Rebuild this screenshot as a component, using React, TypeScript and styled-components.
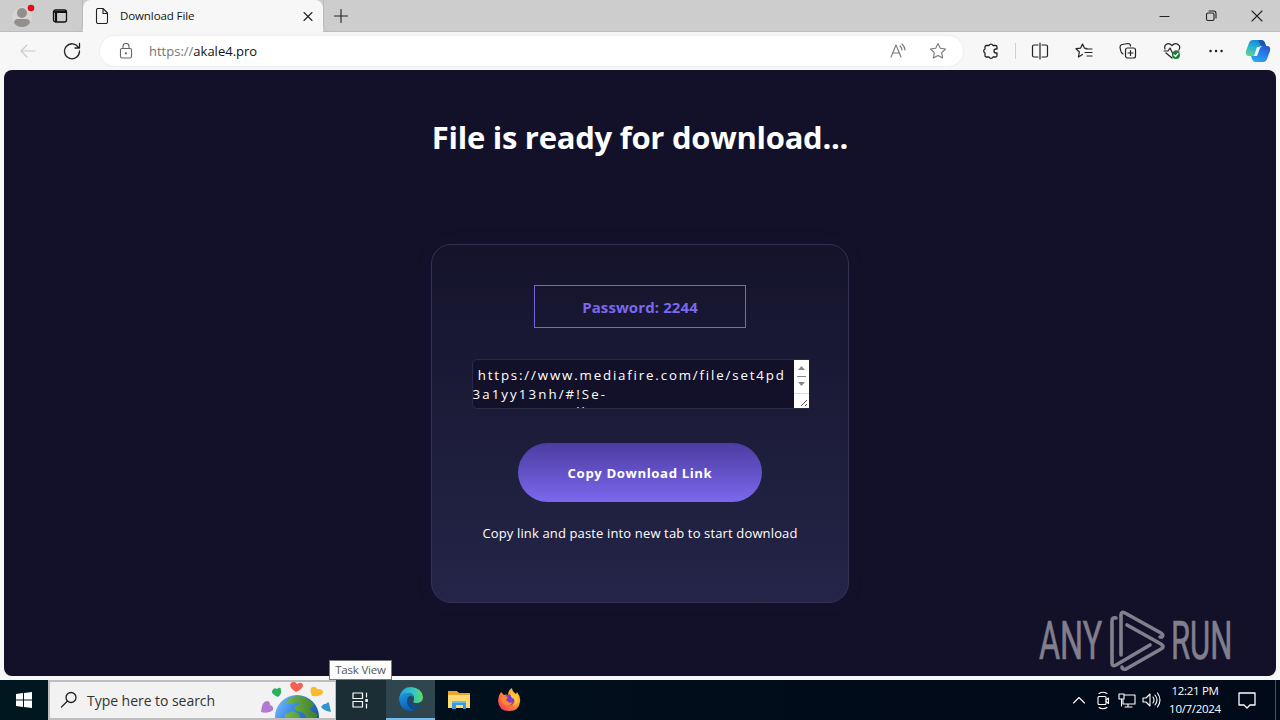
import React from 'react'
import styled, { createGlobalStyle } from 'styled-components'

const GlobalStyle = createGlobalStyle`
    * {
        box-sizing: border-box;
    }

    body {
        margin: 0;
        overflow: hidden;
        font-family: 'Open Sans', 'Noto Sans', sans-serif;
    }

    svg {
        display: block;
        flex-shrink: 0;
    }
`

const Desktop = styled.div`
    display: flex;
    flex-direction: column;
    width: 1280px;
    height: 720px;
    background: #f7f7f7;
`

const TabStrip = styled.div`
    display: flex;
    height: 32px;
    background: #cdcdcd;
    border-bottom: 1px solid #bdbdbd;
`

const ProfileArea = styled.div`
    display: flex;
    align-items: center;
    gap: 17px;
    width: 83px;
    padding-left: 11px;
    border-right: 1px solid #b9b9b9;
    border-radius: 0 0 6px 0;
`

const Tab = styled.div`
    display: flex;
    align-items: center;
    width: 240px;
    height: 32px;
    padding: 0 8px 0 11px;
    border-radius: 8px 8px 0 0;
    background: #f7f7f7;
`

const TabTitle = styled.span`
    flex: 1;
    margin-left: 10px;
    padding-bottom: 1px;
    font-size: 11.5px;
    letter-spacing: -0.1px;
    color: #111;
`

const NewTab = styled.div`
    display: flex;
    align-items: center;
    flex: 1;
    padding-left: 10px;
    border-left: 1px solid #b9b9b9;
    border-radius: 0 0 0 6px;
`

const WindowButtons = styled.div`
    display: flex;
    align-items: center;
    gap: 34px;
    padding-right: 17px;
`

const Toolbar = styled.div`
    display: flex;
    align-items: center;
    height: 38px;
    padding-left: 19px;
`

const ReloadButton = styled.div`
    margin-left: 26px;
`

const AddressBar = styled.div`
    display: flex;
    align-items: center;
    width: 863px;
    height: 30px;
    margin-left: 19px;
    padding: 0 16px 0 18px;
    border-radius: 15px;
    background: #fff;
    box-shadow: 0 0 3px #e4e4e4;
`

const Address = styled.span`
    flex: 1;
    margin-left: 15px;
    font-size: 13px;
    color: #111;

    span {
        color: #747474;
    }
`

const AddressActions = styled.div`
    display: flex;
    gap: 22px;
`

const ToolbarIcons = styled.div`
    display: flex;
    align-items: center;
    flex: 1;
    gap: 26px;
    padding-left: 19px;
`

const Divider = styled.div`
    width: 1px;
    height: 16px;
    margin: 0 -11px;
    background: #cfcfcf;
`

const CopilotButton = styled.div`
    margin-left: -6px;
`

const Page = styled.main`
    display: flex;
    flex-direction: column;
    align-items: center;
    position: relative;
    height: 606px;
    margin: 0 4px 4px;
    padding-top: 43px;
    border-radius: 8px;
    background: #13112a;
`

const Title = styled.h1`
    margin: 0;
    font-size: 31px;
    line-height: 48px;
    font-weight: 700;
    letter-spacing: -0.27px;
    white-space: nowrap;
    color: #fff;
`

const Card = styled.section`
    display: flex;
    flex-direction: column;
    align-items: center;
    width: 418px;
    height: 359px;
    margin-top: 83px;
    padding-top: 40px;
    border: 1px solid #34314c;
    border-radius: 20px;
    background: linear-gradient(#15132b, #242548);
    box-shadow: 0 0 12px rgba(20, 18, 55, 0.6);
`

const Password = styled.div`
    width: 212px;
    height: 43px;
    border: 1px solid #7764dc;
    font-size: 15px;
    font-weight: 700;
    line-height: 43px;
    letter-spacing: 0.1px;
    text-align: center;
    color: #7b68ee;
`

const LinkBox = styled.div`
    display: flex;
    width: 337px;
    height: 50px;
    margin-top: 31px;
    border: 1px solid #2b2945;
    border-right: none;
    border-radius: 5px 0 0 5px;
    background: #13112a;
    overflow: hidden;
`

const LinkText = styled.div`
    flex: 1;
    padding-top: 6px;
    overflow: hidden;
`

const LinkLine = styled.div<{ $spacing: number }>`
    font-size: 13.3px;
    line-height: 19px;
    letter-spacing: ${({ $spacing }) => $spacing}px;
    white-space: pre;
    color: #fff;

    &:last-child {
        margin-top: -1px;
    }
`

const ScrollBar = styled.div`
    width: 15px;
    height: 48px;
    background: #fff;
`

const CopyButton = styled.button`
    width: 244px;
    height: 59px;
    margin-top: 34px;
    padding: 0;
    border: none;
    border-radius: 30px;
    background: linear-gradient(#4c3ca0, #7b68ee);
    font-family: inherit;
    font-size: 13.2px;
    font-weight: 700;
    letter-spacing: 0.6px;
    color: #fff;
`

const Hint = styled.p`
    margin: 21px 0 0;
    font-size: 13px;
    line-height: 20px;
    letter-spacing: 0.14px;
    white-space: nowrap;
    color: #fff;
`

const Watermark = styled.div`
    position: absolute;
    right: 45px;
    bottom: 3px;
    display: flex;
    align-items: center;
    height: 64px;
    color: #827f8d;
`

const WatermarkWord = styled.span<{ $width: number; $scale: number }>`
    width: ${({ $width }) => $width}px;
    font-family: Roboto, sans-serif;
    font-size: 53px;
    line-height: 64px;
    white-space: nowrap;
    transform: scaleX(${({ $scale }) => $scale});
    transform-origin: left center;
    -webkit-text-stroke: 0.7px #827f8d;
`

const Taskbar = styled.footer`
    display: flex;
    position: relative;
    height: 40px;
    background: linear-gradient(90deg, #001720, #010d1b 50%, #010a18);
`

const TaskButton = styled.div<{ $width?: number; $bg?: string; $active?: boolean }>`
    display: flex;
    align-items: center;
    justify-content: center;
    width: ${({ $width }) => $width || 49}px;
    background: ${({ $bg }) => $bg || 'transparent'};
    border-bottom: ${({ $active }) => ($active ? '2px solid #76b9ed' : 'none')};
`

const SearchBox = styled.div`
    display: flex;
    align-items: center;
    width: 288px;
    padding-left: 10px;
    border: 1px solid #bdbdbd;
    border-width: 2px 1px 2px 2px;
    background: #f2f2f2;
`

const SearchText = styled.span`
    flex: 1;
    margin-left: 9px;
    font-size: 14px;
    letter-spacing: -0.04px;
    white-space: nowrap;
    color: #333;
`

const Tooltip = styled.div`
    position: absolute;
    left: 329px;
    top: -20px;
    width: 63px;
    height: 20px;
    border: 1px solid #777;
    background: #fff;
    font-size: 11.5px;
    line-height: 18px;
    letter-spacing: -0.2px;
    text-align: center;
    color: #555;
`

const Tray = styled.div`
    display: flex;
    align-items: center;
    flex: 1;
    justify-content: flex-end;
`

const Clock = styled.div`
    width: 64px;
    margin-right: 8px;
    font-size: 11.5px;
    line-height: 18px;
    letter-spacing: -0.3px;
    text-align: center;
    color: #fff;
`

const ShowDesktop = styled.div`
    width: 5px;
    height: 40px;
    margin-left: 16px;
    border-left: 1px solid #4a515c;
`

type IconProps = {
    size?: number
    color?: string
    width?: number
    children: React.ReactNode
}

function Icon({ size = 18, color = '#222', width = 1.1, children }: IconProps) {
    return (
        <svg
            width={size}
            height={size}
            viewBox={`0 0 ${size} ${size}`}
            fill='none'
            stroke={color}
            strokeWidth={width}
            strokeLinecap='round'
            strokeLinejoin='round'>
            {children}
        </svg>
    )
}

const Avatar = () => (
    <svg width='24' height='28' viewBox='0 0 24 28'>
        <circle cx='11' cy='15' r='10' fill='#d8d5d1' />
        <circle cx='11' cy='11' r='5' fill='#91908e' />
        <path d='M3 21q0-4 4-4h8q4 0 4 4-3 4-8 4t-8-4z' fill='#91908e' />
        <circle cx='20' cy='6' r='3.3' fill='#e00b1c' />
    </svg>
)

const Copilot = () => (
    <svg width='26' height='24' viewBox='0 0 26 24'>
        <defs>
            <linearGradient id='cpLeft' x1='0.6' y1='0' x2='0.2' y2='1'>
                <stop offset='0' stopColor='#1780d8' />
                <stop offset='0.5' stopColor='#27b4d5' />
                <stop offset='1' stopColor='#62d28c' />
            </linearGradient>
            <linearGradient id='cpRight' x1='0.8' y1='0' x2='0.3' y2='1'>
                <stop offset='0' stopColor='#2458cf' />
                <stop offset='0.6' stopColor='#2b86ee' />
                <stop offset='1' stopColor='#28a9ee' />
            </linearGradient>
        </defs>
        <path d='M8 1h8q3 0 4 3l1 3h-4q-3 0-4 3l-2 5q-1 2-3 2H4q-4 0-3-5l3-8q1-3 4-3z' fill='url(#cpLeft)' />
        <path d='M18 23h-8q-2 0-3-3l-1-3h3q3 0 4-3l2-5q1-2 3-2h4q4 0 3 5l-3 8q-1 3-4 3z' fill='url(#cpRight)' />
        <path d='M13 1h3q3 0 4 3l1 3h-5z' fill='#1858ae' />
        <path d='M12 8h3l-3 9H9z' fill='#eef8fc' />
    </svg>
)

const RunLogo = () => (
    <svg
        width='62'
        height='64'
        viewBox='0 0 62 64'
        fill='none'
        stroke='#827f8d'
        strokeWidth='3.6'
        strokeLinecap='round'
        strokeLinejoin='round'>
        <path d='M7 9Q3 8 3 12v42q0 4 4 2l34-20' />
        <path d='M12 46V6q0-4 4-2l36 20q3 2 1 4l-2 0' />
        <path d='M18 16l34 19q4 3 0 5L17 60q-4 1-4-2' />
    </svg>
)

const EarthArt = () => (
    <svg width='74' height='36' viewBox='0 0 74 36'>
        <defs>
            <linearGradient id='sea' x1='0' y1='0' x2='1' y2='0.6'>
                <stop offset='0' stopColor='#7cc4ff' />
                <stop offset='0.5' stopColor='#3682e0' />
                <stop offset='1' stopColor='#1450a0' />
            </linearGradient>
            <linearGradient id='land' x1='0' x2='1'>
                <stop offset='0' stopColor='#74b84a' />
                <stop offset='1' stopColor='#3f7f2b' />
            </linearGradient>
        </defs>
        <circle cx='36' cy='35' r='22' fill='url(#sea)' />
        <path d='M25 20q3-5 11-6 8 0 14 5l3 4-4 3 1 3 6 3v4H45q-1-5-5-6l-5-1-2-4 5-2-1-3-6 2-5 0zM24 32l8-3 6 3 1 4H24z' fill='url(#land)' />
        <path d='M35 10q-8-5-5-9 3-3 6 1 5-3 6 1 0 4-7 7z' fill='#f26053' />
        <path d='M17 15q-7-3-6-6 2-4 5-2 4-3 4 1 1 4-3 7z' fill='#2daf60' />
        <path d='M51 14q-3-7 0-9 4-1 5 2 6 0 6 3-1 5-11 4z' fill='#fab92f' />
        <path d='M0 30q1-11 6-11 3 0 3 4 4 1 3 5-4 4-12 2z' fill='#b27ad3' />
        <path d='M60 25q3-4 5-3 2-3 3-1l2 9q-7-1-10-5z' fill='#3194d2' />
    </svg>
)

const EdgeLogo = () => (
    <svg width='24' height='24' viewBox='0 0 24 24'>
        <defs>
            <linearGradient id='edgeTop' x1='0' x2='1'>
                <stop offset='0' stopColor='#239ee2' />
                <stop offset='0.6' stopColor='#33c6c4' />
                <stop offset='1' stopColor='#62dc60' />
            </linearGradient>
            <linearGradient id='edgeSide' x1='0' y1='0' x2='0.4' y2='1'>
                <stop offset='0' stopColor='#1d9be6' />
                <stop offset='1' stopColor='#0d5fb4' />
            </linearGradient>
        </defs>
        <path d='M0 12Q2 0 12 0q11 1 12 10 0 6-7 6-4 0-2-3 1-6-5-7-7 0-10 6z' fill='url(#edgeTop)' />
        <path d='M0 12Q3 5 9 6q5 0 6 5-1-2-3-2-4 0-4 5 0 6 7 9-2 1-4 1Q1 23 0 12z' fill='url(#edgeSide)' />
        <path d='M10 10q-3 3-1 8 3 6 8 4 4-2 5-5-5 2-9 0-4-3-3-7z' fill='#0e4b8c' />
    </svg>
)

const Folder = () => (
    <svg width='23' height='20' viewBox='0 0 23 20'>
        <path d='M0 1h9l2 2h11v15H0z' fill='#e9a62c' />
        <path d='M0 5h22v13H0z' fill='#ffda72' />
        <path d='M4 19v-8h14v8h-3v-4H8v4z' fill='#359bdd' />
        <path d='M4 11h14v2H4z' fill='#66bceb' />
    </svg>
)

const Firefox = () => (
    <svg width='24' height='24' viewBox='0 0 24 24'>
        <defs>
            <linearGradient id='fox' x1='1' y1='0' x2='0' y2='1'>
                <stop offset='0' stopColor='#ffde35' />
                <stop offset='0.45' stopColor='#ff922d' />
                <stop offset='1' stopColor='#f52c67' />
            </linearGradient>
        </defs>
        <path d='M4 4l3 3q2-1 4 0 0-5 4-7 0 3 4 6l1-2q4 5 3 10-1 9-11 9T1 13q0-5 3-9z' fill='url(#fox)' />
        <circle cx='12' cy='12' r='5.5' fill='#783bd3' />
        <path d='M4 10q4-3 7-1l-2 3q3 4 7 2-3 5-8 3-4-2-4-7z' fill='#ff852e' />
        <path d='M14 3q-2 6 3 8 2 4-1 7 7-3 5-10-5-1-7-5z' fill='#ffc832' />
    </svg>
)

export default function App() {
    return (
        <Desktop>
            <GlobalStyle />
            <TabStrip>
                <ProfileArea>
                    <Avatar />
                    <Icon size={16} color='#111' width={1.3}>
                        <rect x='1.5' y='2' width='13' height='12' rx='2' />
                        <path d='M3 4h10.500M4 5v8' strokeWidth='2.200' />
                    </Icon>
                </ProfileArea>
                <Tab>
                    <Icon size={16}>
                        <path d='M2.5 2q0-1.5 1.5-1.5h5l4.5 4.5v9q0 1.5-1.5 1.5H4q-1.5 0-1.5-1.5zM9 1v4.5h4.5' />
                    </Icon>
                    <TabTitle>Download File</TabTitle>
                    <Icon size={14}><path d='M3 3.500l8 8M11 3.500l-8 8' /></Icon>
                </Tab>
                <NewTab>
                    <Icon size={14}><path d='M7 .5v13M.5 7h13' /></Icon>
                </NewTab>
                <WindowButtons>
                    <Icon size={12}><path d='M1 6.5h9' /></Icon>
                    <Icon size={12}>
                        <rect x='1.5' y='3' width='7.5' height='7.5' rx='1.5' />
                        <path d='M4 1h4.5q2.500 0 2.500 2.500V8' />
                    </Icon>
                    <Icon size={12}><path d='M1 1l10 10M11 1L1 11' /></Icon>
                </WindowButtons>
            </TabStrip>

            <Toolbar>
                <Icon color='#c9c9c9'><path d='M16 9H2M8 3L2 9l6 6' /></Icon>
                <ReloadButton>
                    <Icon width={1.3}><path d='M15.5 5.5A7.5 7.5 0 1 0 16.5 9M16.5 1.5v4.5H12' /></Icon>
                </ReloadButton>
                <AddressBar>
                    <Icon size={16} color='#666'>
                        <rect x='2.5' y='5.5' width='11' height='9.5' rx='1.5' />
                        <path d='M5 5.5V3.5q0-3 3-3t3 3v2' />
                        <circle cx='8' cy='10.3' r='0.6' fill='#666' />
                    </Icon>
                    <Address><span>https://</span>akale4.pro</Address>
                    <AddressActions>
                        <Icon color='#777'>
                            <path d='M2 15L7 3l5 12M4 11h6M11 4q2 2 2 4M13 2q3 3 3 6' />
                        </Icon>
                        <Icon color='#777'>
                            <path d='M9 1.5l2.3 4.7 5.2.8-3.8 3.7.9 5.2L9 13.500l-4.600 2.400.9-5.200L1.500 7l5.200-.8z' />
                        </Icon>
                    </AddressActions>
                </AddressBar>
                <ToolbarIcons>
                    <Icon width={1.3}>
                        <path d='M4.500 3.500h2.500a2.200 2.200 0 0 1 4 0h2.500q1.500 0 1.500 1.500v2h-1a2 2 0 0 0 0 4h1v2.500q0 1.500-1.500 1.500H11a2.200 2.200 0 0 1-4 0H4.500q-1.500 0-1.500-1.500V11a2.200 2.200 0 0 1 0-4V5q0-1.500 1.500-1.500z' />
                    </Icon>
                    <Divider />
                    <Icon width={1.2}><path d='M7 3H3Q1.5 3 1.5 4.5v9Q1.5 15 3 15h4M11 3h4q1.5 0 1.5 1.5v9q0 1.5-1.5 1.5h-4M9 1v16' /></Icon>
                    <Icon width={1.2}><path d='M12 6.500l-2.500-.3L7.500 2 5.500 6.200l-4.500.5L4.400 10l-1 5L7.500 12.500M11 7h6M10 10.500h7M12 14h5' /></Icon>
                    <Icon width={1.2}>
                        <rect x='6.5' y='6' width='10' height='10' rx='2' />
                        <path d='M11.500 8.500v5M9 11h5M4 12Q2 11 1.500 8L1 5q0-2 2-2.500l6-1q2 0 2.500 2V4' />
                    </Icon>
                    <Icon width={1.2}>
                        <path d='M2 7q-1-3 1-4.500 3-2 6 1 3-3 6-1 3 2 1 5M1 9h4l2-3 3 6 2-3h4M3 11l6 5' />
                        <circle cx='13' cy='13' r='4' fill='#168038' stroke='none' />
                        <path d='M11 13l1.5 1.5L15 11.5' stroke='#fff' />
                    </Icon>
                    <Icon><path d='M3.500 9h.1M9 9h.1M14.500 9h.1' strokeWidth='2.4' /></Icon>
                    <CopilotButton><Copilot /></CopilotButton>
                </ToolbarIcons>
            </Toolbar>

            <Page>
                <Title>File is ready for download...</Title>
                <Card>
                    <Password>Password: 2244</Password>
                    <LinkBox>
                        <LinkText>
                            <LinkLine $spacing={1.83}>{' https://www.mediafire.com/file/set4pd'}</LinkLine>
                            <LinkLine $spacing={2.08}>3a1yy13nh/#!Se-</LinkLine>
                            <LinkLine $spacing={2}>{'                   ll'}</LinkLine>
                        </LinkText>
                        <ScrollBar>
                            <svg width='15' height='48' viewBox='0 0 15 48'>
                                <path d='M4 10l3.5-4 3.5 4zM4 22l3.5 4 3.5-4z' fill='#858585' />
                                <path d='M3 16.5h9' stroke='#858585' />
                                <path d='M0 33.5h15' stroke='#ddd' />
                                <path d='M7 46l6-6M11 46l2-2' stroke='#555' />
                            </svg>
                        </ScrollBar>
                    </LinkBox>
                    <CopyButton>Copy Download Link</CopyButton>
                    <Hint>Copy link and paste into new tab to start download</Hint>
                </Card>
                <Watermark>
                    <WatermarkWord $width={70} $scale={0.61}>ANY</WatermarkWord>
                    <RunLogo />
                    <WatermarkWord $width={60} $scale={0.585}>RUN</WatermarkWord>
                </Watermark>
            </Page>

            <Taskbar>
                <TaskButton $width={48}>
                    <svg width='16' height='16' viewBox='0 0 16 16' fill='#fff'>
                        <path d='M0 2l7-1v6.5H0zM8 .9L16 0v7.5H8zM0 8.5h7V15l-7-1zM8 8.5h8V16l-8-.9z' />
                    </svg>
                </TaskButton>
                <SearchBox>
                    <Icon width={1.3}><circle cx='11' cy='6.5' r='5' /><path d='M7.5 10L1.5 16' /></Icon>
                    <SearchText>Type here to search</SearchText>
                    <EarthArt />
                </SearchBox>
                <TaskButton $width={50} $bg='#1b2e36'>
                    <Icon color='#fff' width={1.2}>
                        <path d='M1 2h9.500v5.500H1zM1 10.500h9.500V16H1zM14.500 2v4M14.500 13v4' />
                        <rect x='13.3' y='8' width='2.5' height='3' fill='#fff' stroke='none' />
                    </Icon>
                </TaskButton>
                <TaskButton $bg='#30464e' $active><EdgeLogo /></TaskButton>
                <TaskButton><Folder /></TaskButton>
                <TaskButton><Firefox /></TaskButton>
                <Tooltip>Task View</Tooltip>
                <Tray>
                    <Icon size={24} color='#fff'><path d='M6.500 15l5.500-5.500 5.500 5.500' /></Icon>
                    <Icon size={24} color='#fff'><rect x='7' y='8.500' width='8' height='8' rx='1' /><path d='M15 12l2.500-2v5.500L15 13.500M8 5.500q4-2.500 8 0M8 19.500q4 2.500 8 0' /></Icon>
                    <Icon size={24} color='#fff'><path d='M9 7h11v9H8v-4M13 16v3M10 19h7M4 6h5v5H4zM6.5 11v7' /></Icon>
                    <Icon size={24} color='#fff'><path d='M4 10h3l4-4v12l-4-4H4zM14 9q2 3 0 6M16 7q4 5 0 10M18.5 5q5 7 0 14' /></Icon>
                    <Clock>12:21 PM<br />10/7/2024</Clock>
                    <Icon size={24} color='#fff' width={1.3}><path d='M4 5h16v12h-5l-3 3-3-3H4z' /></Icon>
                    <ShowDesktop />
                </Tray>
            </Taskbar>
        </Desktop>
    )
}
